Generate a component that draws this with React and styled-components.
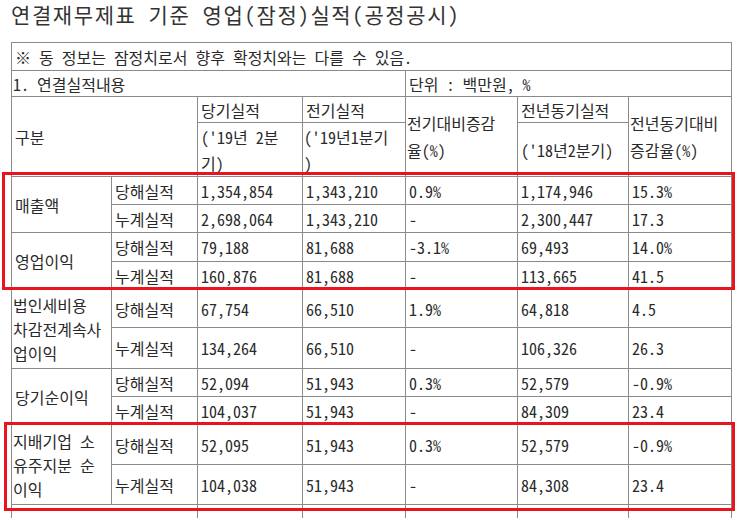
import styled, { createGlobalStyle } from 'styled-components';

const GlobalStyle = createGlobalStyle`
  body {
    margin: 0;
    background: #fff;
  }
`;

const Page = styled.div`
  position: relative;
  padding-left: 11px;
  font-family: "Noto Sans CJK KR", "Noto Sans", sans-serif;
  font-feature-settings: "hwid";
  color: #2a2a2a;
`;

const Title = styled.h1`
  margin: 0;
  height: 42px;
  font-size: 21px;
  letter-spacing: 1.6px;
  font-weight: normal;
  line-height: 28px;
  color: #333;
`;

const Sheet = styled.table`
  border-collapse: collapse;
  table-layout: fixed;
  width: 721px;
  font-size: 16px;
`;

const Row = styled.tr`
  height: ${(p) => p.$h}px;
`;

const Cell = styled.td`
  border: 1px solid #8a8a8a;
  padding: 0 ${(p) => (p.$pad ?? 3)}px;
  line-height: ${(p) => p.$lh ?? 24}px;
  vertical-align: middle;
  text-align: left;
  font-weight: normal;
  white-space: nowrap;
  overflow: visible;
`;

const Mark = styled.div`
  position: absolute;
  left: ${(p) => p.$x}px;
  top: ${(p) => p.$y}px;
  width: ${(p) => p.$w}px;
  height: ${(p) => p.$h}px;
  box-sizing: border-box;
  border: 3px solid #e8141e;
  pointer-events: none;
`;

const cols = [100, 86, 105, 103, 112, 111, 103];

const groups = [
  {
    name: '매출액',
    heights: [28, 28],
    rows: [
      ['당해실적', '1,354,854', '1,343,210', '0.9%', '1,174,946', '15.3%'],
      ['누계실적', '2,698,064', '1,343,210', '-', '2,300,447', '17.3'],
    ],
  },
  {
    name: '영업이익',
    heights: [29, 28],
    rows: [
      ['당해실적', '79,188', '81,688', '-3.1%', '69,493', '14.0%'],
      ['누계실적', '160,876', '81,688', '-', '113,665', '41.5'],
    ],
  },
  {
    name: ['법인세비용', '차감전계속사', '업이익'],
    heights: [38, 41],
    rows: [
      ['당해실적', '67,754', '66,510', '1.9%', '64,818', '4.5'],
      ['누계실적', '134,264', '66,510', '-', '106,326', '26.3'],
    ],
  },
  {
    name: '당기순이익',
    heights: [28, 28],
    rows: [
      ['당해실적', '52,094', '51,943', '0.3%', '52,579', '-0.9%'],
      ['누계실적', '104,037', '51,943', '-', '84,309', '23.4'],
    ],
  },
  {
    name: ['지배기업 소', '유주지분 순', '이익'],
    heights: [40, 40],
    rows: [
      ['당해실적', '52,095', '51,943', '0.3%', '52,579', '-0.9%'],
      ['누계실적', '104,038', '51,943', '-', '84,308', '23.4'],
    ],
  },
];

function Lines({ text }) {
  if (!Array.isArray(text)) return text;
  return text.map((t, i) => (
    <span key={i}>
      {i > 0 && <br />}
      {t}
    </span>
  ));
}

export default function App() {
  return (
    <Page>
      <GlobalStyle />
      <Title>연결재무제표 기준 영업(잠정)실적(공정공시)</Title>
      <Sheet>
        <colgroup>
          {cols.map((w, i) => (
            <col key={i} style={{ width: w }} />
          ))}
        </colgroup>
        <tbody>
          <Row $h={28}>
            <Cell colSpan={7}>※ 동 정보는 잠정치로서 향후 확정치와는 다를 수 있음.</Cell>
          </Row>
          <Row $h={26}>
            <Cell colSpan={4} $pad={1}>1. 연결실적내용</Cell>
            <Cell colSpan={3}>단위 : 백만원, %</Cell>
          </Row>
          <Row $h={26}>
            <Cell colSpan={2} rowSpan={2}>구분</Cell>
            <Cell>당기실적</Cell>
            <Cell>전기실적</Cell>
            <Cell rowSpan={2} $pad={1} $lh={27}>
              <Lines text={['전기대비증감', '율(%)']} />
            </Cell>
            <Cell>전년동기실적</Cell>
            <Cell rowSpan={2} $pad={1} $lh={27}>
              <Lines text={['전년동기대비', '증감율(%)']} />
            </Cell>
          </Row>
          <Row $h={54}>
            <Cell $lh={26}>
              <Lines text={["('19년 2분", '기)']} />
            </Cell>
            <Cell $pad={1} $lh={26}>
              <Lines text={["('19년1분기", ')']} />
            </Cell>
            <Cell>('18년2분기)</Cell>
          </Row>
          {groups.map((g) =>
            g.rows.map((r, i) => (
              <Row key={`${g.rows[0][1]}-${i}`} $h={g.heights[i]}>
                {i === 0 && (
                  <Cell rowSpan={2} $pad={Array.isArray(g.name) ? 1 : 3}>
                    <Lines text={g.name} />
                  </Cell>
                )}
                {r.map((v, j) => (
                  <Cell key={j}>{v}</Cell>
                ))}
              </Row>
            ))
          )}
          <Row $h={26}>
            <Cell colSpan={2} />
            <Cell />
            <Cell />
            <Cell />
            <Cell />
            <Cell />
          </Row>
        </tbody>
      </Sheet>
      <Mark $x={2} $y={172} $w={733} $h={118} />
      <Mark $x={4} $y={422} $w={731} $h={89} />
    </Page>
  );
}
